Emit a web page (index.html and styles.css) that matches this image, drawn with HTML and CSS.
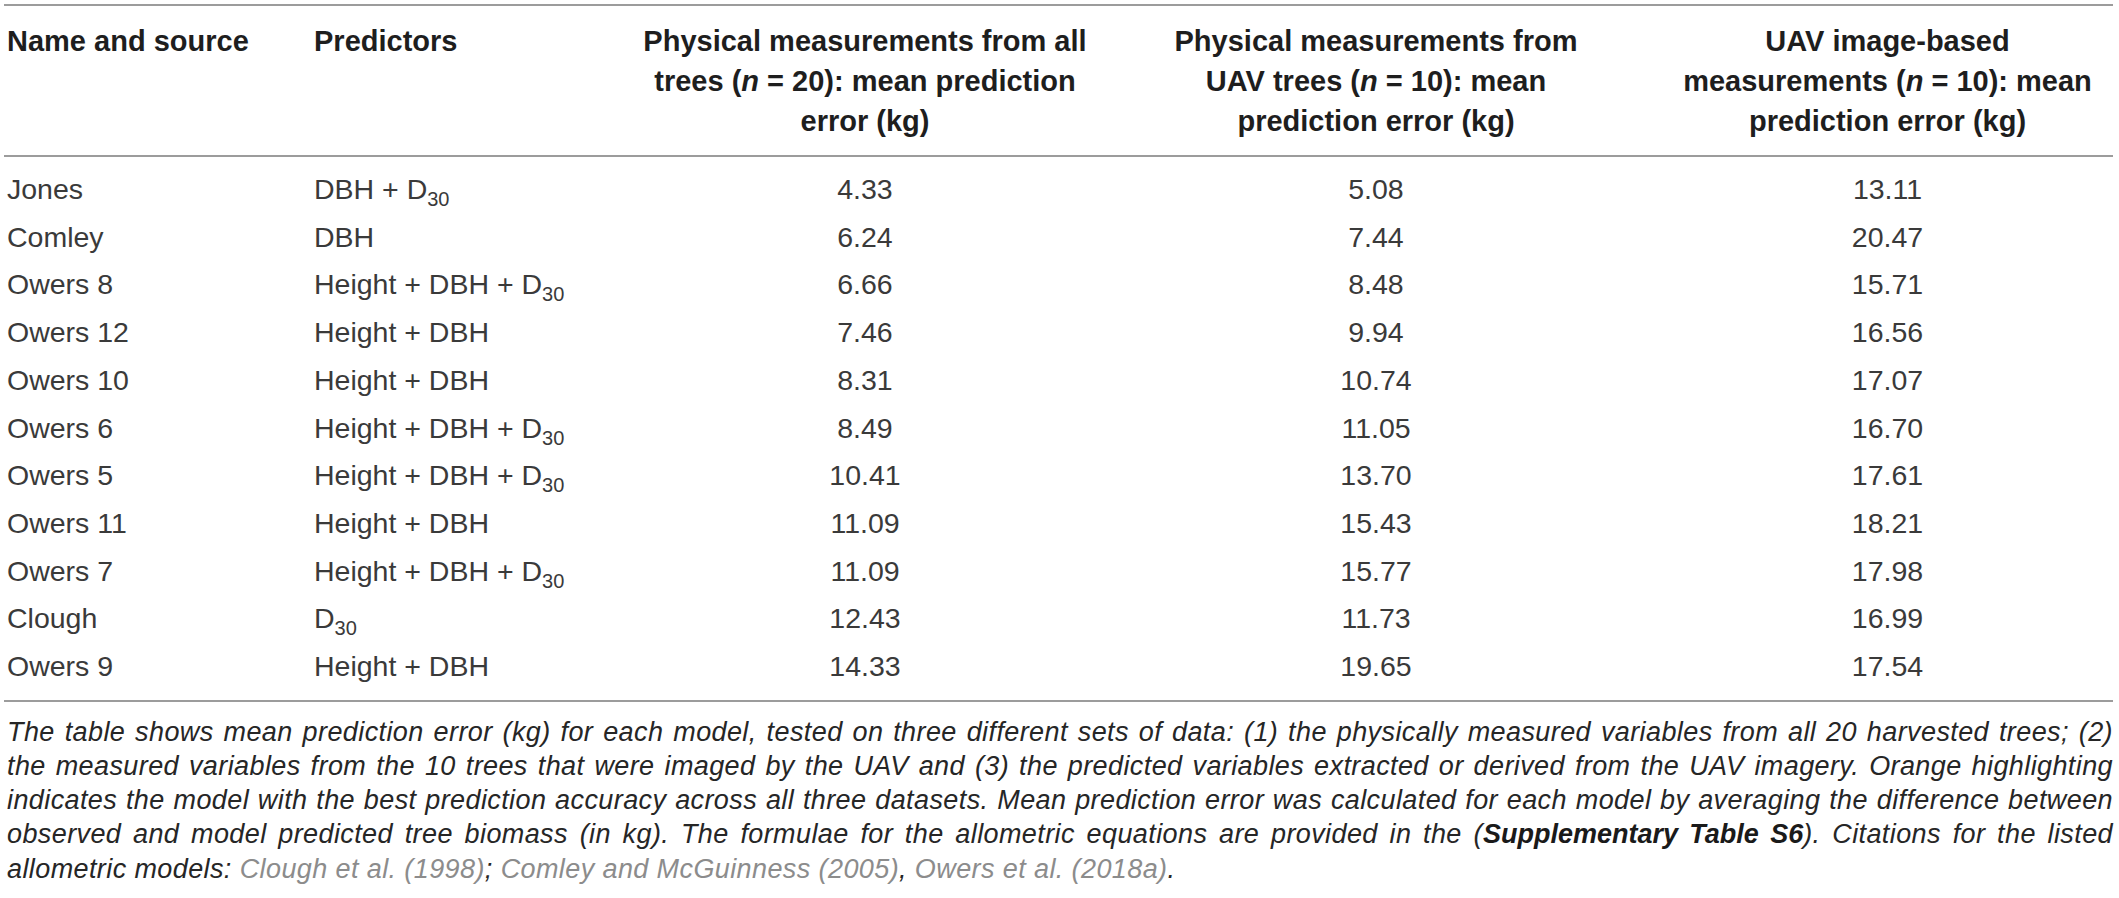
FILE: index.html
```html
<!DOCTYPE html>
<html lang="en">
<head>
    <meta charset="UTF-8">
    <meta name="viewport" content="width=device-width, initial-scale=1.0">
    <title>Mean prediction error of allometric models</title>
    <link rel="stylesheet" href="styles.css">
</head>
<body>
    <table class="results">
        <colgroup>
            <col class="col-name">
            <col class="col-pred">
            <col class="col-all">
            <col class="col-uav">
            <col class="col-img">
        </colgroup>
        <thead>
            <tr>
                <th class="left">Name and source</th>
                <th class="left">Predictors</th>
                <th>Physical measurements from all<br>trees (<i>n</i> = 20): mean prediction<br>error (kg)</th>
                <th>Physical measurements from<br>UAV trees (<i>n</i> = 10): mean<br>prediction error (kg)</th>
                <th>UAV image-based<br>measurements (<i>n</i> = 10): mean<br>prediction error (kg)</th>
            </tr>
        </thead>
        <tbody>
            <tr><td class="left">Jones</td><td class="left">DBH + D<sub>30</sub></td><td>4.33</td><td>5.08</td><td>13.11</td></tr>
            <tr><td class="left">Comley</td><td class="left">DBH</td><td>6.24</td><td>7.44</td><td>20.47</td></tr>
            <tr><td class="left">Owers 8</td><td class="left">Height + DBH + D<sub>30</sub></td><td>6.66</td><td>8.48</td><td>15.71</td></tr>
            <tr><td class="left">Owers 12</td><td class="left">Height + DBH</td><td>7.46</td><td>9.94</td><td>16.56</td></tr>
            <tr><td class="left">Owers 10</td><td class="left">Height + DBH</td><td>8.31</td><td>10.74</td><td>17.07</td></tr>
            <tr><td class="left">Owers 6</td><td class="left">Height + DBH + D<sub>30</sub></td><td>8.49</td><td>11.05</td><td>16.70</td></tr>
            <tr><td class="left">Owers 5</td><td class="left">Height + DBH + D<sub>30</sub></td><td>10.41</td><td>13.70</td><td>17.61</td></tr>
            <tr><td class="left">Owers 11</td><td class="left">Height + DBH</td><td>11.09</td><td>15.43</td><td>18.21</td></tr>
            <tr><td class="left">Owers 7</td><td class="left">Height + DBH + D<sub>30</sub></td><td>11.09</td><td>15.77</td><td>17.98</td></tr>
            <tr><td class="left">Clough</td><td class="left">D<sub>30</sub></td><td>12.43</td><td>11.73</td><td>16.99</td></tr>
            <tr><td class="left">Owers 9</td><td class="left">Height + DBH</td><td>14.33</td><td>19.65</td><td>17.54</td></tr>
        </tbody>
    </table>

    <div class="note">
        <div class="note-lines">The table shows mean prediction error (kg) for each model, tested on three different sets of data: (1) the physically measured variables from all 20 harvested trees; (2)<br>the measured variables from the 10 trees that were imaged by the UAV and (3) the predicted variables extracted or derived from the UAV imagery. Orange highlighting<br>indicates the model with the best prediction accuracy across all three datasets. Mean prediction error was calculated for each model by averaging the difference between<br>observed and model predicted tree biomass (in kg). The formulae for the allometric equations are provided in the (<b>Supplementary Table S6</b>). Citations for the listed</div>
        <div>allometric models: <span class="cite">Clough et al. (1998)</span>; <span class="cite">Comley and McGuinness (2005)</span>, <span class="cite">Owers et al. (2018a)</span>.</div>
    </div>
</body>
</html>
```

FILE: styles.css
```css
body {
    font-family: 'Liberation Sans', Arial, sans-serif;
    background-color: #FFFFFF;
    color: #2b2b2b;
    margin: 0;
    padding: 4px 6px 0 4px;
}

.results {
    width: 100%;
    border-collapse: collapse;
    table-layout: fixed;
    border-top: 2px solid #9c9c9c;
    border-bottom: 2px solid #9c9c9c;
}

.col-name { width: 307px; }
.col-pred { width: 329px; }
.col-all { width: 450px; }
.col-uav { width: 572px; }

th {
    font-size: 29px;
    font-weight: bold;
    color: #1e1e1e;
    line-height: 40px;
    text-align: center;
    vertical-align: top;
    padding: 15px 0 14px 0;
    border-bottom: 2px solid #9c9c9c;
}

td {
    font-size: 28.5px;
    line-height: 47.7px;
    color: #3a3a3a;
    text-align: center;
    padding: 0;
    white-space: nowrap;
}

th.left, td.left {
    text-align: left;
    padding-left: 3px;
}

tbody tr:first-child td {
    padding-top: 9px;
}

tbody tr:last-child td {
    padding-bottom: 9px;
}

sub {
    font-size: 20px;
    line-height: 0;
    vertical-align: -7px;
}

.note {
    font-size: 27px;
    font-style: italic;
    letter-spacing: 0.4px;
    line-height: 34.2px;
    color: #262626;
    margin-top: 13px;
    padding-left: 3px;
}

.note-lines {
    text-align: justify;
    text-align-last: justify;
}

.note b {
    color: #1a1a1a;
    letter-spacing: 0;
}

.cite {
    color: #8c8c8c;
}
```
